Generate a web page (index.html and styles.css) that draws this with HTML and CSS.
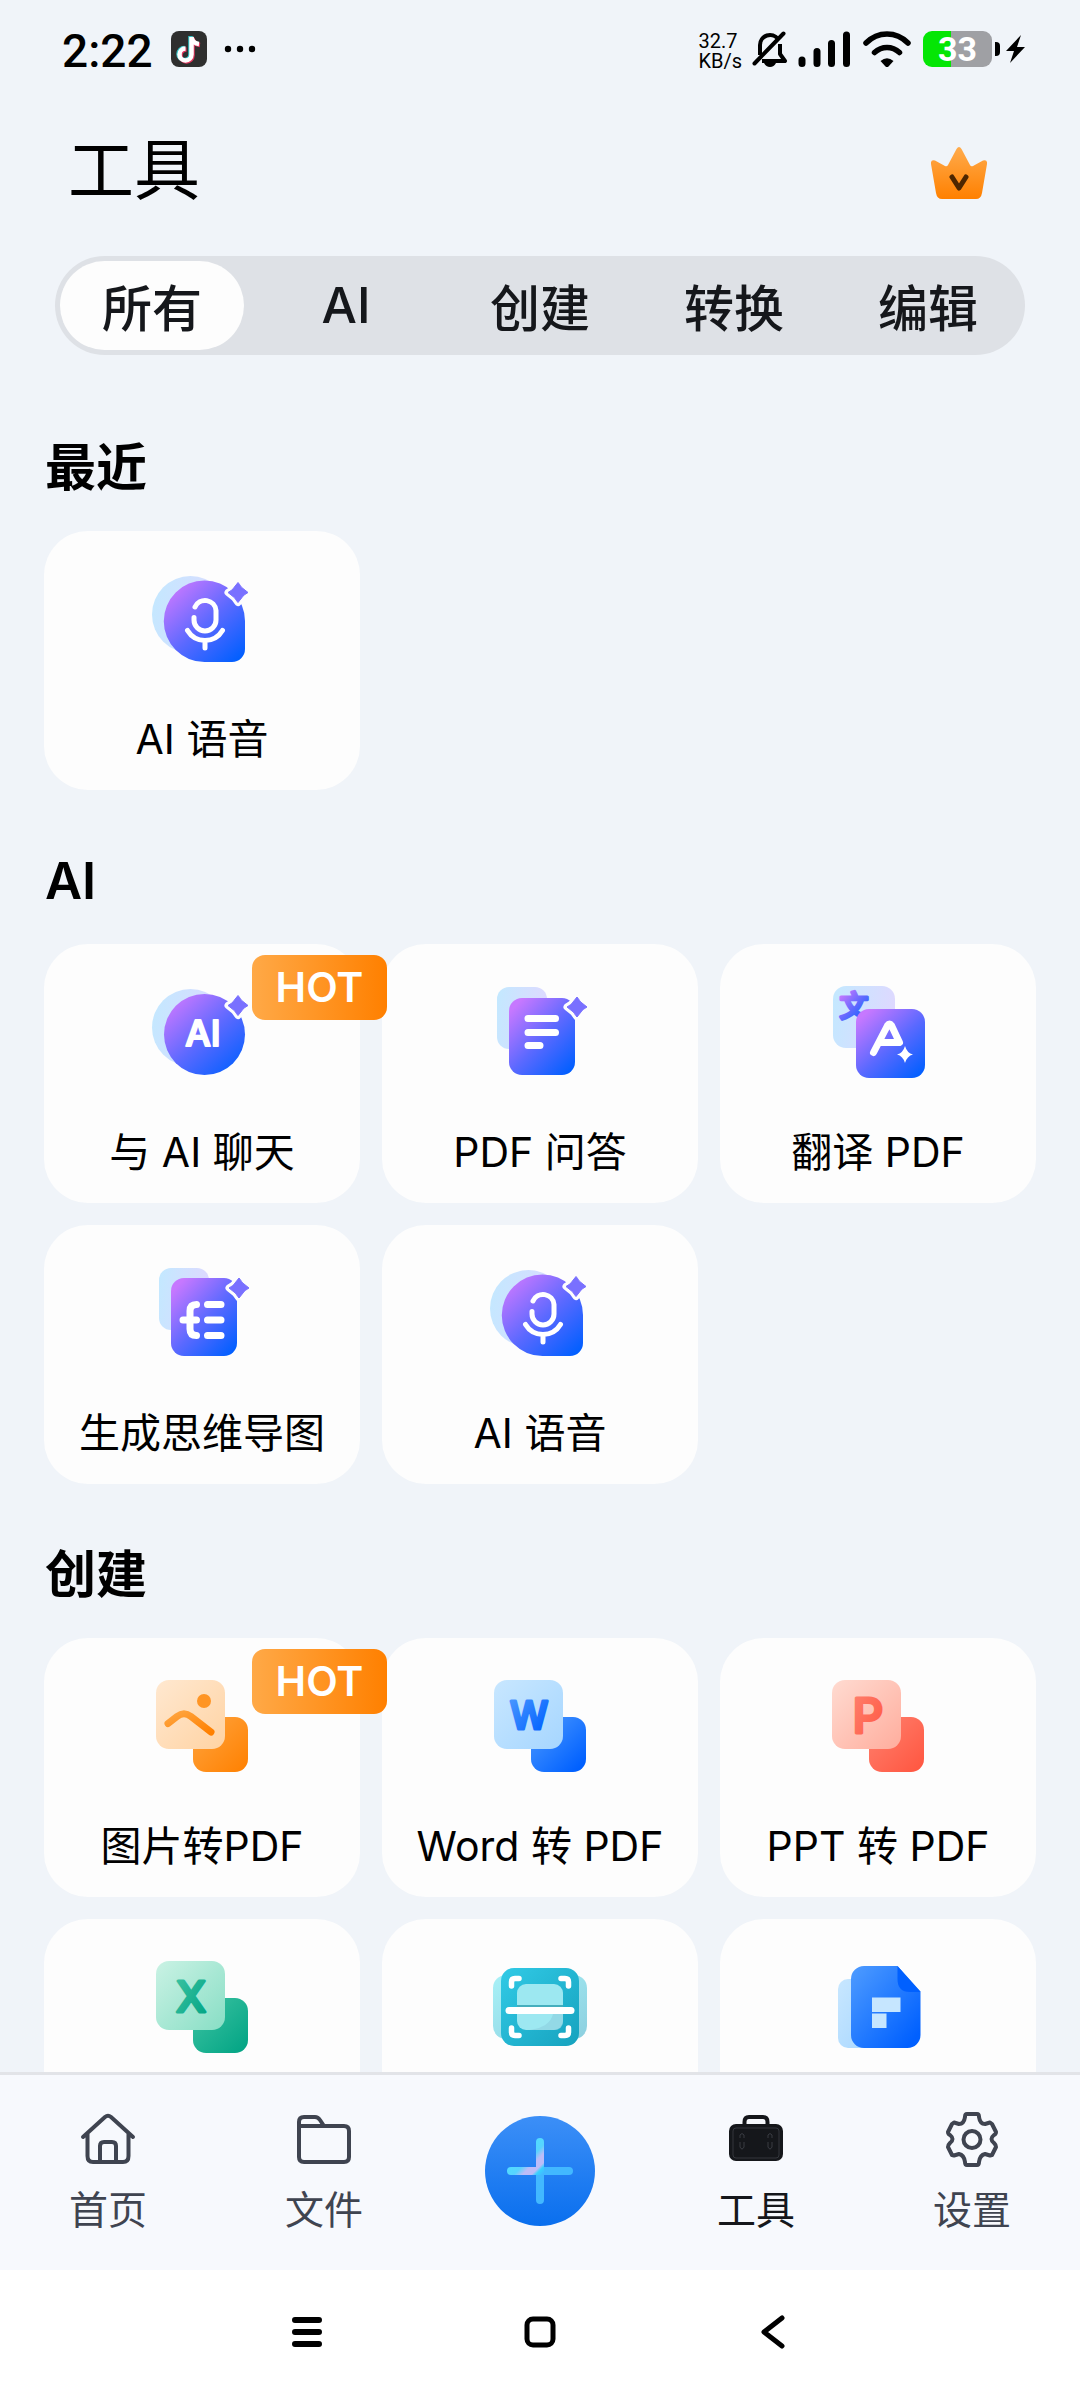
FILE: index.html
```html
<!DOCTYPE html>
<html lang="zh-CN">
<head>
    <meta charset="UTF-8">
    <meta name="viewport" content="width=device-width, initial-scale=1.0">
    <title>工具</title>
    <link rel="stylesheet" href="styles.css">
</head>
<body>
    <!-- shared gradients and shapes -->
    <svg class="defs" aria-hidden="true">
        <defs>
            <linearGradient id="violet" x1="0.1" y1="0.1" x2="0.9" y2="1">
                <stop offset="0" stop-color="#c678ff"/>
                <stop offset="0.5" stop-color="#5b69ff"/>
                <stop offset="1" stop-color="#005fff"/>
            </linearGradient>
            <linearGradient id="haze" x1="0" y1="0.3" x2="1" y2="0.5">
                <stop offset="0" stop-color="#c4e8ff"/>
                <stop offset="1" stop-color="#dfd8ff"/>
            </linearGradient>
            <linearGradient id="orange" x1="0" y1="0" x2="1" y2="1">
                <stop offset="0" stop-color="#ffa540"/>
                <stop offset="1" stop-color="#ff8000"/>
            </linearGradient>
            <linearGradient id="orangeLight" x1="0" y1="0" x2="1" y2="1">
                <stop offset="0" stop-color="#ffe8d0"/>
                <stop offset="1" stop-color="#ffd3a3"/>
            </linearGradient>
            <linearGradient id="blue" x1="0" y1="0" x2="1" y2="1">
                <stop offset="0" stop-color="#4f9cff"/>
                <stop offset="0.9" stop-color="#0060ff"/>
            </linearGradient>
            <linearGradient id="blueLight" x1="0" y1="0" x2="1" y2="1">
                <stop offset="0" stop-color="#c8e7ff"/>
                <stop offset="1" stop-color="#a6d6ff"/>
            </linearGradient>
            <linearGradient id="red" x1="0" y1="0" x2="1" y2="1">
                <stop offset="0" stop-color="#ff8270"/>
                <stop offset="1" stop-color="#ff553f"/>
            </linearGradient>
            <linearGradient id="redLight" x1="0" y1="0" x2="1" y2="1">
                <stop offset="0" stop-color="#ffdbd1"/>
                <stop offset="1" stop-color="#ffad9d"/>
            </linearGradient>
            <linearGradient id="green" x1="0" y1="0" x2="1" y2="1">
                <stop offset="0" stop-color="#3fc4a3"/>
                <stop offset="1" stop-color="#00a383"/>
            </linearGradient>
            <linearGradient id="greenLight" x1="0" y1="0" x2="1" y2="1">
                <stop offset="0" stop-color="#caf2e4"/>
                <stop offset="1" stop-color="#88dec5"/>
            </linearGradient>
            <linearGradient id="teal" x1="0" y1="0" x2="1" y2="1">
                <stop offset="0" stop-color="#31cae6"/>
                <stop offset="1" stop-color="#16a2be"/>
            </linearGradient>
            <linearGradient id="tealLight" x1="0" y1="0" x2="1" y2="1">
                <stop offset="0" stop-color="#a8f1f7"/>
                <stop offset="1" stop-color="#8ccfdf"/>
            </linearGradient>
            <linearGradient id="crown" x1="0" y1="0" x2="0" y2="1">
                <stop offset="0" stop-color="#ffab4c"/>
                <stop offset="1" stop-color="#ff8000"/>
            </linearGradient>
            <linearGradient id="round" x1="0" y1="0" x2="0" y2="1">
                <stop offset="0" stop-color="#3c8ff7"/>
                <stop offset="1" stop-color="#0a6fee"/>
            </linearGradient>
            <linearGradient id="shine" gradientUnits="userSpaceOnUse" x1="36" y1="36" x2="58" y2="58">
                <stop offset="0" stop-color="#4fdcff"/>
                <stop offset="0.35" stop-color="#58d4ff"/>
                <stop offset="0.55" stop-color="#bcbcf8"/>
                <stop offset="0.75" stop-color="#bcbcf8"/>
                <stop offset="0.85" stop-color="#38d2ff"/>
                <stop offset="1" stop-color="#42b8ff"/>
            </linearGradient>
            <path id="star" stroke-linejoin="round" d="M0-10C2-8 3-5 5-4L10 0C7 2 5 3 4 5L0 10C-2 8-3 5-5 4L-10 0C-7-2-5-3-4-5Z"/>
            <g id="spark">
                <use href="#star" fill="#fdfdfd" stroke="#fdfdfd" stroke-width="7"/>
                <use href="#star" fill="#7970ff" stroke="#7970ff" stroke-width="1"/>
            </g>
            <symbol id="mic" viewBox="0 0 100 96">
                <circle cx="38.5" cy="43.5" r="38.5" fill="url(#haze)"/>
                <path fill="url(#violet)" d="M52.5 9.5A40.5 40.5 0 0 1 93 50V78A13 13 0 0 1 80 91H52.5A40.5 40.5 0 0 1 52.5 9.5Z"/>
                <g fill="none" stroke="#fff" stroke-width="5" stroke-linecap="round">
                    <path d="M43 36A11 11 0 0 1 64 39.5V49A11 11 0 0 1 42 49V46.5"/>
                    <path d="M35.5 59.5A20.4 20.4 0 0 0 70.5 59.5M53 70V77"/>
                </g>
                <use href="#spark" x="86" y="21.5"/>
            </symbol>
        </defs>
    </svg>

    <div class="page">
        <div class="status">
            <span class="time">2:22</span>
            <svg class="app-icon" width="36" height="36" viewBox="0 0 36 36">
                <rect width="36" height="36" rx="8" fill="#2f2f2f"/>
                <g fill="none" stroke-width="4.5">
                    <path stroke="#35c5c8" d="M19.5 5V23A6 6 0 1 1 13.5 17M19.5 6C20 10 23 12.5 27 13"/>
                    <path stroke="#e0355d" d="M21.5 7V24.5A6 6 0 1 1 15.5 18.5M21.5 7C22 11 25 13.5 29 14"/>
                    <path stroke="#fff" d="M20.5 6V23.5A6 6 0 1 1 14.5 17.5M20.5 6C21 10 24 12.5 28 13"/>
                </g>
            </svg>
            <svg class="dots" width="32" height="8" viewBox="0 0 32 8">
                <circle cx="4" cy="4" r="3.2"/><circle cx="16" cy="4" r="3.2"/><circle cx="28" cy="4" r="3.2"/>
            </svg>
            <span class="speed">32.7<br>KB/s</span>
            <svg class="bell" width="36" height="36" viewBox="0 0 36 36">
                <path fill="none" stroke="#000" stroke-width="4" stroke-linejoin="round" d="M8 24V14A10 10 0 0 1 26 8M28 13V23L33 30H10"/>
                <path d="M12 32H24Q22 36 18 36T12 32Z"/>
                <path stroke="#000" stroke-width="4" stroke-linecap="round" d="M2.5 32.5L31.5 2.5"/>
            </svg>
            <svg class="signal" width="53" height="36" viewBox="0 0 53 36">
                <path stroke="#000" stroke-width="7" stroke-linecap="round" d="M4 29V32.5M19 20.5V32.5M33.5 12.5V32.5M48.5 4V32.5"/>
            </svg>
            <svg class="wifi" width="48" height="36" viewBox="0 0 48 36">
                <g fill="none" stroke="#000" stroke-width="5.5" stroke-linecap="round">
                    <path d="M3 12Q12 3 24 3T45 12"/>
                    <path d="M11.5 21.5Q17 16.5 24 16.5T36.5 21.5"/>
                </g>
                <path d="M17.5 30Q24 24.5 30.5 30L25.5 35.5Q24 37 22.5 35.5Z"/>
            </svg>
            <span class="battery">33</span>
            <span class="battery-tip"></span>
            <svg class="bolt" width="19" height="28" viewBox="0 0 19 28">
                <path d="M15 0L0 16H8L4 28L19 12H11Z"/>
            </svg>
        </div>

        <header class="header">
            <h1>工具</h1>
            <button class="crown" type="button" aria-label="VIP">
                <svg width="56" height="52" viewBox="0 0 56 52">
                    <path fill="url(#crown)" d="M25.5 2Q28 -2 30.5 2L39 18Q40 20 42 19L52 13.5Q56.5 12 56 17L51 46Q50 52 45 52H11Q6 52 5 46L0 17Q-0.5 12 4 13.5L14 19Q16 20 17 18Z"/>
                    <path fill="none" stroke="#4d2600" stroke-width="5" stroke-linecap="round" stroke-linejoin="round" d="M21 30L28 41L35 30"/>
                </svg>
            </button>
        </header>

        <div class="tabs">
            <button class="tab active" type="button">所有</button>
            <button class="tab" type="button">AI</button>
            <button class="tab" type="button">创建</button>
            <button class="tab" type="button">转换</button>
            <button class="tab" type="button">编辑</button>
        </div>

        <main class="content">
            <h2>最近</h2>
            <div class="grid">
                <a class="card" href="#">
                    <svg class="icon" viewBox="0 0 100 96"><use href="#mic"/></svg>
                    <span class="label">AI 语音</span>
                </a>
            </div>

            <h2>AI</h2>
            <div class="grid">
                <a class="card" href="#">
                    <svg class="icon" viewBox="0 0 100 96">
                        <circle cx="38.5" cy="43.5" r="38.5" fill="url(#haze)"/>
                        <circle cx="52.5" cy="50.5" r="40.5" fill="url(#violet)"/>
                        <text class="glyph" x="51" y="62" font-size="36" fill="#fff" stroke="#fff" stroke-width="2">AI</text>
                        <use href="#spark" x="86" y="21.5"/>
                    </svg>
                    <span class="label">与 AI 聊天</span>
                    <span class="hot">HOT</span>
                </a>
                <a class="card" href="#">
                    <svg class="icon" viewBox="0 0 100 96">
                        <rect x="7" y="3" width="50" height="62" rx="12" fill="url(#haze)"/>
                        <rect x="19" y="14" width="66" height="77" rx="13" fill="url(#violet)"/>
                        <path stroke="#fff" stroke-width="7" stroke-linecap="round" d="M38 34.5H65.5M38 48.5H65.5M38 61.5H50"/>
                        <use href="#spark" x="87" y="23"/>
                    </svg>
                    <span class="label">PDF 问答</span>
                </a>
                <a class="card" href="#">
                    <svg class="icon" viewBox="0 0 100 96">
                        <rect x="5" y="2" width="62" height="62" rx="13" fill="url(#haze)"/>
                        <text class="glyph" x="26" y="33" font-size="29" fill="url(#violet)" stroke="url(#violet)" stroke-width="3">文</text>
                        <rect x="28" y="25" width="69" height="69" rx="13" fill="url(#violet)"/>
                        <path fill="none" stroke="#fff" stroke-width="7" stroke-linecap="round" stroke-linejoin="round" d="M45.5 68.5L59.5 41.5Q61.5 38.5 63.5 41.5L71.5 58.5H52"/>
                        <path fill="#fff" d="M77 62Q79 69 85 70.5Q79 72 77 79Q75 72 69 70.5Q75 69 77 62Z"/>
                    </svg>
                    <span class="label">翻译 PDF</span>
                </a>
                <a class="card" href="#">
                    <svg class="icon" viewBox="0 0 100 96">
                        <rect x="7" y="3" width="50" height="62" rx="12" fill="url(#haze)"/>
                        <rect x="19" y="13" width="66" height="78" rx="13" fill="url(#violet)"/>
                        <path fill="none" stroke="#fff" stroke-width="7" stroke-linecap="round" d="M31 55H44.5M44.5 39.5Q38 39.5 38 46V64Q38 70.5 44.5 70.5M55.5 39.5H69M55.5 55H69M55.5 70.5H69"/>
                        <use href="#spark" x="87" y="23"/>
                    </svg>
                    <span class="label">生成思维导图</span>
                </a>
                <a class="card" href="#">
                    <svg class="icon" viewBox="0 0 100 96"><use href="#mic"/></svg>
                    <span class="label">AI 语音</span>
                </a>
            </div>

            <h2>创建</h2>
            <div class="grid">
                <a class="card" href="#">
                    <svg class="icon" viewBox="0 0 100 96">
                        <rect x="41" y="39" width="55" height="55" rx="13" fill="url(#orange)"/>
                        <rect x="4" y="2" width="69" height="69" rx="13" fill="url(#orangeLight)"/>
                        <circle cx="52" cy="23" r="7" fill="#ff9524"/>
                        <path fill="none" stroke="url(#orange)" stroke-width="7" stroke-linecap="round" d="M16 45.5L25 38.5Q32 33 39 38.5L59 54"/>
                    </svg>
                    <span class="label">图片转PDF</span>
                    <span class="hot">HOT</span>
                </a>
                <a class="card" href="#">
                    <svg class="icon" viewBox="0 0 100 96">
                        <rect x="41" y="39" width="55" height="55" rx="13" fill="url(#blue)"/>
                        <rect x="4" y="2" width="69" height="69" rx="13" fill="url(#blueLight)"/>
                        <text class="glyph" x="39" y="51" font-size="38" fill="url(#blue)" stroke="url(#blue)" stroke-width="3">W</text>
                    </svg>
                    <span class="label">Word 转 PDF</span>
                </a>
                <a class="card" href="#">
                    <svg class="icon" viewBox="0 0 100 96">
                        <rect x="41" y="39" width="55" height="55" rx="13" fill="url(#red)"/>
                        <rect x="4" y="2" width="69" height="69" rx="13" fill="url(#redLight)"/>
                        <text class="glyph" x="40" y="55" font-size="48" fill="url(#red)" stroke="url(#red)" stroke-width="3">P</text>
                    </svg>
                    <span class="label">PPT 转 PDF</span>
                </a>
                <a class="card" href="#">
                    <svg class="icon" viewBox="0 0 100 96">
                        <rect x="41" y="39" width="55" height="55" rx="13" fill="url(#green)"/>
                        <rect x="4" y="2" width="69" height="69" rx="13" fill="url(#greenLight)"/>
                        <text class="glyph" x="39" y="53" font-size="43" fill="url(#green)" stroke="url(#green)" stroke-width="3">X</text>
                    </svg>
                </a>
                <a class="card" href="#">
                    <svg class="icon" viewBox="0 0 100 96">
                        <rect x="3" y="16" width="94" height="64" rx="13" fill="url(#tealLight)"/>
                        <rect x="11" y="9" width="78" height="78" rx="13" fill="url(#teal)"/>
                        <rect x="27" y="25" width="46" height="46" rx="9" fill="#9de8f1"/>
                        <path fill="#8ccfdf" d="M73 55V62Q73 71 64 71L40 71Q60 68 63 55Z" opacity="0.6"/>
                        <path stroke="#45aebd" stroke-width="2" d="M27 47H73"/>
                        <g fill="none" stroke="#fff" stroke-linecap="round">
                            <path stroke-width="7" d="M19 51.5H81"/>
                            <path stroke-width="5.5" d="M29 19.5H25Q21.5 19.5 21.5 23V27M71 19.5H75Q78.5 19.5 78.5 23V27M29 76.5H25Q21.5 76.5 21.5 73V69M71 76.5H75Q78.5 76.5 78.5 73V69"/>
                        </g>
                    </svg>
                </a>
                <a class="card" href="#">
                    <svg class="icon" viewBox="0 0 100 96">
                        <rect x="10" y="20" width="40" height="69" rx="10" fill="url(#blueLight)"/>
                        <path fill="url(#blue)" d="M36 7H69.5L92.5 32.5V76A13 13 0 0 1 79.5 89H36A13 13 0 0 1 23 76V20A13 13 0 0 1 36 7Z"/>
                        <path fill="#0060ff" d="M69.5 7L92.5 33H82Q69.5 33 69.5 20Z"/>
                        <path fill="#c6e6ff" d="M44 38.5H72.5V53H44ZM44 54.5H58.5V69H44Z"/>
                    </svg>
                </a>
            </div>
        </main>

        <nav class="nav">
            <a class="nav-item" href="#">
                <svg width="60" height="60" viewBox="0 0 60 60" fill="none" stroke="#3f4450" stroke-width="4" stroke-linecap="round" stroke-linejoin="round">
                    <path d="M5 28L27 8Q30 5.5 33 8L55 28M9.500 25V47Q9.500 53 15 53H45Q50.5 53 50.5 47V25M22 52V37Q22 33 26 33H34Q38 33 38 37V52"/>
                </svg>
                <span>首页</span>
            </a>
            <a class="nav-item" href="#">
                <svg width="60" height="60" viewBox="0 0 60 60" fill="none" stroke="#3f4450" stroke-width="4" stroke-linejoin="round">
                    <path d="M5 17V13Q5 8 10 8H21Q24 8 26 11L30 17H50Q55 17 55 22V48Q55 53 50 53H10Q5 53 5 48V17H30"/>
                </svg>
                <span>文件</span>
            </a>
            <a class="nav-item add" href="#" aria-label="添加">
                <svg width="110" height="110" viewBox="0 0 110 110">
                    <circle cx="55" cy="55" r="55" fill="url(#round)"/>
                    <path stroke="#42b8ff" stroke-width="8" stroke-linecap="round" d="M55 55V84M55 55H84"/>
                    <path fill="none" stroke="url(#shine)" stroke-width="8" stroke-linecap="round" d="M55 26V55H26"/>
                </svg>
            </a>
            <a class="nav-item current" href="#">
                <svg width="60" height="60" viewBox="0 0 60 60">
                    <rect x="3" y="15" width="54" height="37" rx="7" fill="#15171b"/>
                    <path fill="none" stroke="#15171b" stroke-width="4" d="M18.5 17V13Q18.5 8 23 8H37Q41.5 8 41.5 13V17"/>
                    <rect x="7" y="19" width="46" height="30" rx="3" fill="none" stroke="#34373d"/>
                    <path fill="none" stroke="#3a3d43" d="M14 29V26Q16 23 18 26V29M14 33V38Q16 42 18 38V33M42 29V26Q44 23 46 26V29M42 33V38Q44 42 46 38V33"/>
                </svg>
                <span>工具</span>
            </a>
            <a class="nav-item" href="#">
                <svg width="60" height="60" viewBox="0 0 60 60" fill="none" stroke="#3f4450" stroke-width="4" stroke-linejoin="round">
                    <path d="M25 5H35Q37 5 37 8Q38 15 43 15L48 13.5L50 15L54 23Q54 25 52 26Q47 30 52 34Q54 36 54 38L50 46L48 46.5L43 45Q38 46 37 53Q37 56 35 56H25Q23 56 23 53Q22 46 17 45L12 46.5L10 46L6 38Q6 36 8 34Q13 30 8 26Q6 25 6 23L10 15L12 13.5L17 15Q22 15 23 8Q23 5 25 5Z"/>
                    <circle cx="30" cy="30.5" r="8.5"/>
                </svg>
                <span>设置</span>
            </a>
        </nav>

        <div class="system">
            <button type="button" aria-label="菜单">
                <svg width="32" height="34" viewBox="0 0 32 34"><path stroke="#000" stroke-width="6" stroke-linecap="round" d="M4 5H28M4 17H28M4 29H28"/></svg>
            </button>
            <button type="button" aria-label="主屏幕">
                <svg width="32" height="34" viewBox="0 0 32 34"><rect x="3" y="4" width="26" height="26" rx="6" fill="none" stroke="#000" stroke-width="5"/></svg>
            </button>
            <button type="button" aria-label="返回">
                <svg width="32" height="34" viewBox="0 0 32 34"><path fill="none" stroke="#000" stroke-width="5" stroke-linecap="round" stroke-linejoin="round" d="M25 3L7 17L25 31"/></svg>
            </button>
        </div>
    </div>
</body>
</html>
```

FILE: styles.css
```css
* {
    box-sizing: border-box;
}

body {
    margin: 0;
    font-family: Inter, 'Noto Sans CJK SC', sans-serif;
    background-color: #f0f4f9;
    color: #000;
}

button {
    padding: 0;
    border: none;
    background: none;
    font-family: inherit;
    color: inherit;
    cursor: pointer;
}

a {
    color: inherit;
    text-decoration: none;
}

svg {
    display: block;
    flex-shrink: 0;
}

.defs {
    position: absolute;
    width: 0;
    height: 0;
}

.page {
    display: flex;
    flex-direction: column;
    height: 100vh;
}

/* status bar */
.status {
    display: flex;
    align-items: center;
    flex-shrink: 0;
    height: 98px;
    padding: 0 55px 0 62px;
}

.time {
    padding-top: 4px;
    font-family: Roboto, sans-serif;
    font-size: 46px;
    font-weight: 500;
    line-height: 50px;
}

.app-icon {
    margin-left: 18px;
}

.dots {
    margin-left: 17px;
}

.speed {
    margin-left: auto;
    margin-right: 10px;
    padding-top: 4px;
    font-family: Roboto, sans-serif;
    font-size: 20px;
    line-height: 20px;
}

.signal {
    margin: 0 12px 0 10px;
}

.battery {
    width: 69px;
    margin-left: 12px;
    border-radius: 9px;
    background: linear-gradient(to right, #05e605 40%, #9fa0a4 40%);
    color: #fff;
    font-family: Roboto, sans-serif;
    font-size: 34px;
    font-weight: 700;
    line-height: 36px;
    text-align: center;
}

.battery-tip {
    width: 5px;
    height: 14px;
    margin: 0 6px 0 3px;
    border-radius: 0 4px 4px 0;
    background-color: #000;
}

/* title */
.header {
    display: flex;
    align-items: center;
    justify-content: space-between;
    flex-shrink: 0;
    height: 146px;
    padding: 4px 93px 0 68px;
}

h1 {
    margin: 0;
    padding-bottom: 6px;
    font-size: 66px;
    font-weight: 400;
    line-height: 90px;
}

/* tabs */
.tabs {
    display: flex;
    flex-shrink: 0;
    height: 99px;
    margin: 12px 55px 0;
    border-radius: 50px;
    background-color: #dee1e6;
}

.tab {
    flex: 1;
    margin: 5px;
    padding-bottom: 2px;
    border-radius: 45px;
    color: #15171b;
    font-size: 50px;
    font-weight: 500;
}

.tab.active {
    background-color: #fdfdfd;
}

/* tool cards */
.content {
    flex: 1;
    min-height: 0;
    overflow: hidden;
    padding: 22px 44px 0;
}

h2 {
    margin: 0;
    padding: 56px 0 28px 1px;
    font-size: 51px;
    font-weight: 600;
    line-height: 70px;
}

.grid {
    display: grid;
    grid-template-columns: repeat(3, 1fr);
    gap: 22px;
}

.card {
    position: relative;
    display: flex;
    flex-direction: column;
    align-items: center;
    min-height: 259px;
    padding: 40px 0 26px;
    border-radius: 44px;
    background-color: #fdfdfd;
}

.icon {
    width: 100px;
    height: 96px;
    overflow: visible;
}

.glyph {
    font-weight: 500;
    text-anchor: middle;
    stroke-linejoin: round;
}

.label {
    margin-top: 47px;
    font-size: 41px;
    line-height: 50px;
    white-space: nowrap;
}

.hot {
    position: absolute;
    top: 11px;
    right: -27px;
    z-index: 1;
    width: 135px;
    border-radius: 13px;
    background: linear-gradient(to right, #ffa947, #ff8000);
    color: #fff;
    font-size: 41px;
    font-weight: 600;
    line-height: 65px;
    text-align: center;
}

/* bottom navigation */
.nav {
    display: flex;
    flex-shrink: 0;
    height: 198px;
    border-top: 3px solid #e2e4e8;
    background-color: #f7f9fd;
}

.nav-item {
    display: flex;
    flex: 1;
    flex-direction: column;
    align-items: center;
    gap: 16px;
    padding-top: 34px;
    color: #3f4450;
    font-size: 39px;
    line-height: 50px;
}

.nav-item.add {
    padding-top: 41px;
}

.nav-item.current {
    color: #15171b;
}

.system {
    display: flex;
    align-items: center;
    justify-content: center;
    flex-shrink: 0;
    gap: 201px;
    height: 130px;
    padding-bottom: 6px;
    background-color: #fff;
}
```
